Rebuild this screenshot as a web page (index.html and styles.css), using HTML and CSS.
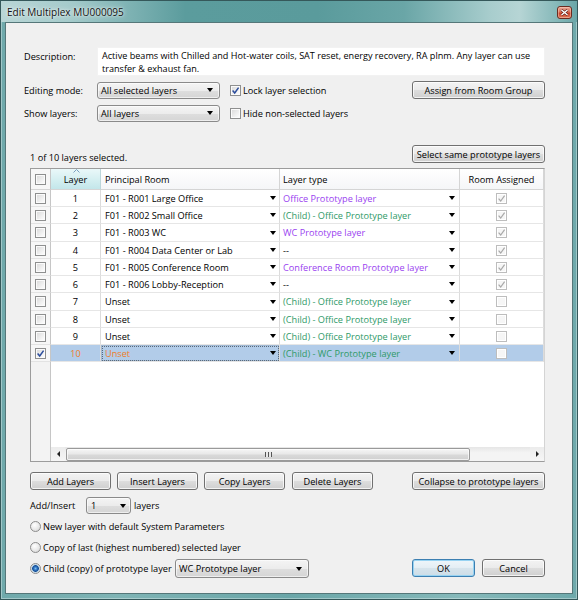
FILE: index.html
```html
<!DOCTYPE html>
<html>
<head>
<meta charset="utf-8">
<link rel="stylesheet" href="styles.css">
</head>
<body>
<div class="window">
  <div class="titlebar">
    <span class="title">Edit Multiplex MU000095</span>
    <span class="close"><svg width="9" height="7" viewBox="0 0 9 7"><path class="xs" d="M1.5 1l6 5M7.5 1l-6 5"/><path class="xw" d="M1.5 1l6 5M7.5 1l-6 5"/></svg></span>
  </div>
  <div class="client">
    <div class="r-desc">
      <div class="label">Description:</div>
      <div class="desc">Active beams with Chilled and Hot-water coils, SAT reset, energy recovery, RA plnm. Any layer can use<br>transfer &amp; exhaust fan.</div>
    </div>
    <div class="r-opt">
      <div class="label">Editing mode:</div>
      <div class="combo c-mode"><span>All selected layers</span><i class="arr"></i></div>
      <div class="check"><span class="cb"><svg viewBox="0 0 9 9"><path class="ckb" d="M1.6 4.6L3.7 7 7.6 1.6"/></svg></span><span>Lock layer selection</span></div>
      <div class="btn b-wide">Assign from Room Group</div>
    </div>
    <div class="r-opt">
      <div class="label">Show layers:</div>
      <div class="combo c-mode"><span>All layers</span><i class="arr"></i></div>
      <div class="check"><span class="cb"></span><span>Hide non-selected layers</span></div>
    </div>
    <div class="r-sel">
      <div class="count">1 of 10 layers selected.</div>
      <div class="btn b-wide">Select same prototype layers</div>
    </div>

    <div class="grid">
      <div class="ghead">
        <div class="rh"><span class="cb"></span></div>
        <div class="h-layer"><svg class="sort" width="7" height="4" viewBox="0 0 7 4"><path d="M0.5 3.5L3.5 0.5 6.5 3.5"/></svg>Layer</div>
        <div class="h-left">Principal Room</div>
        <div class="h-left2">Layer type</div>
        <div class="h-center">Room Assigned</div>
      </div>

      <div class="grow">
        <div class="rh"><span class="cb"></span></div>
        <div class="num">1</div>
        <div class="room"><span>F01 - R001 Large Office</span><i class="arr"></i></div>
        <div class="type purple"><span>Office Prototype layer</span><i class="arr"></i></div>
        <div class="ra"><span class="cb dis"><svg viewBox="0 0 9 9"><path class="ckd" d="M1.6 4.6L3.7 7 7.6 1.6"/></svg></span></div>
      </div>
      <div class="grow">
        <div class="rh"><span class="cb"></span></div>
        <div class="num">2</div>
        <div class="room"><span>F01 - R002 Small Office</span><i class="arr"></i></div>
        <div class="type green"><span>(Child) - Office Prototype layer</span><i class="arr"></i></div>
        <div class="ra"><span class="cb dis"><svg viewBox="0 0 9 9"><path class="ckd" d="M1.6 4.6L3.7 7 7.6 1.6"/></svg></span></div>
      </div>
      <div class="grow tall">
        <div class="rh"><span class="cb"></span></div>
        <div class="num">3</div>
        <div class="room"><span>F01 - R003 WC</span><i class="arr"></i></div>
        <div class="type purple"><span>WC Prototype layer</span><i class="arr"></i></div>
        <div class="ra"><span class="cb dis"><svg viewBox="0 0 9 9"><path class="ckd" d="M1.6 4.6L3.7 7 7.6 1.6"/></svg></span></div>
      </div>
      <div class="grow">
        <div class="rh"><span class="cb"></span></div>
        <div class="num">4</div>
        <div class="room"><span>F01 - R004 Data Center or Lab</span><i class="arr"></i></div>
        <div class="type"><span>--</span><i class="arr"></i></div>
        <div class="ra"><span class="cb dis"><svg viewBox="0 0 9 9"><path class="ckd" d="M1.6 4.6L3.7 7 7.6 1.6"/></svg></span></div>
      </div>
      <div class="grow">
        <div class="rh"><span class="cb"></span></div>
        <div class="num">5</div>
        <div class="room"><span>F01 - R005 Conference Room</span><i class="arr"></i></div>
        <div class="type purple"><span>Conference Room Prototype layer</span><i class="arr"></i></div>
        <div class="ra"><span class="cb dis"><svg viewBox="0 0 9 9"><path class="ckd" d="M1.6 4.6L3.7 7 7.6 1.6"/></svg></span></div>
      </div>
      <div class="grow">
        <div class="rh"><span class="cb"></span></div>
        <div class="num">6</div>
        <div class="room"><span>F01 - R006 Lobby-Reception</span><i class="arr"></i></div>
        <div class="type"><span>--</span><i class="arr"></i></div>
        <div class="ra"><span class="cb dis"><svg viewBox="0 0 9 9"><path class="ckd" d="M1.6 4.6L3.7 7 7.6 1.6"/></svg></span></div>
      </div>
      <div class="grow tall">
        <div class="rh"><span class="cb"></span></div>
        <div class="num">7</div>
        <div class="room"><span>Unset</span><i class="arr"></i></div>
        <div class="type green"><span>(Child) - Office Prototype layer</span><i class="arr"></i></div>
        <div class="ra"><span class="cb dis"></span></div>
      </div>
      <div class="grow">
        <div class="rh"><span class="cb"></span></div>
        <div class="num">8</div>
        <div class="room"><span>Unset</span><i class="arr"></i></div>
        <div class="type green"><span>(Child) - Office Prototype layer</span><i class="arr"></i></div>
        <div class="ra"><span class="cb dis"></span></div>
      </div>
      <div class="grow">
        <div class="rh"><span class="cb"></span></div>
        <div class="num">9</div>
        <div class="room"><span>Unset</span><i class="arr"></i></div>
        <div class="type green"><span>(Child) - Office Prototype layer</span><i class="arr"></i></div>
        <div class="ra"><span class="cb dis"></span></div>
      </div>
      <div class="grow sel">
        <div class="rh"><span class="cb"><svg viewBox="0 0 9 9"><path class="ckb" d="M1.6 4.6L3.7 7 7.6 1.6"/></svg></span></div>
        <div class="num orange">10</div>
        <div class="room orange focus"><span>Unset</span><i class="arr"></i></div>
        <div class="type green"><span>(Child) - WC Prototype layer</span><i class="arr"></i></div>
        <div class="ra"><span class="cb dis"></span></div>
      </div>

      <div class="gfill"></div>

      <div class="hscroll">
        <div class="sb-rh"></div>
        <div class="sb-btn"><i class="arr-l"></i></div>
        <div class="sb-track"><div class="thumb"><i class="grip"></i></div></div>
        <div class="sb-btn"><i class="arr-r"></i></div>
      </div>
    </div>

    <div class="r-btns">
      <div class="btn b-std">Add Layers</div>
      <div class="btn b-std">Insert Layers</div>
      <div class="btn b-std">Copy Layers</div>
      <div class="btn b-std b-del">Delete Layers</div>
      <div class="btn b-wide">Collapse to prototype layers</div>
    </div>

    <div class="r-add">
      <div class="add-label">Add/Insert</div>
      <div class="combo c-num"><span>1</span><i class="arr"></i></div>
      <div class="layers-word">layers</div>
    </div>

    <div class="r-radio r1">
      <span class="radio"></span><span>New layer with default System Parameters</span>
    </div>
    <div class="r-radio r2">
      <span class="radio"></span><span>Copy of last (highest numbered) selected layer</span>
    </div>
    <div class="r-last">
      <span class="radio on"></span><span class="radio-text">Child (copy) of prototype layer</span>
      <div class="combo c-proto"><span>WC Prototype layer</span><i class="arr"></i></div>
      <div class="btn b-ok">OK</div>
      <div class="btn b-cancel">Cancel</div>
    </div>
  </div>
</div>
</body>
</html>
```

FILE: styles.css
```css
* { box-sizing: border-box; }
html, body { margin: 0; padding: 0; }
body {
  width: 578px;
  height: 600px;
  overflow: hidden;
  font-family: "Open Sans", "Liberation Sans", sans-serif;
  font-size: 9.2px;
  color: #000;
  background: #fff;
}

/* ---------- window frame ---------- */
.window {
  width: 578px;
  height: 600px;
  display: flex;
  flex-direction: column;
  border: 1px solid #35585a;
  padding: 0 4px 5px 4px;
  background: linear-gradient(to right, #6fa9ab, #7fb4b5 20%, #6aa6a8 50%, #86b9ba 80%, #6ea9ab);
  box-shadow: inset 0 0 0 1px rgba(255,255,255,0.35);
}
.titlebar {
  height: 21px;
  margin: 0 -4px;
  padding: 0 5px 0 6px;
  display: flex;
  align-items: center;
  background: linear-gradient(to right, #b9d6d6 0%, #a5cbcb 12%, #7fb3b4 22%, #5b9c9d 32%, #5a9b9c 55%, #6aa6a7 70%, #a8cdcd 85%, #b6d5d5 90%, #82b6b7 97%, #6aa6a8 100%);
}
.title {
  font-size: 10px;
  line-height: 12px;
  margin-top: 1px;
  color: #111;
  text-shadow: 0 0 5px rgba(255,255,255,0.9), 0 0 2px rgba(255,255,255,0.8);
}
.close {
  margin-left: auto;
  margin-top: 2px;
  width: 15px;
  height: 13px;
  border: 1px solid #6b2b20;
  border-radius: 3px;
  background: linear-gradient(#eaa897, #d9715a 45%, #c8402a 55%, #de7a5c);
  display: flex;
  align-items: center;
  justify-content: center;
  box-shadow: inset 0 0 0 1px rgba(255,220,200,0.45);
}
.close svg { display: block; }
.close .xs { stroke: #5a1a10; stroke-width: 2.6; fill: none; }
.close .xw { stroke: #fff; stroke-width: 1.5; fill: none; }

.client {
  flex: 1;
  border: 1px solid #557779;
  background: #f0f0f0;
  display: flex;
  flex-direction: column;
}

/* ---------- top rows ---------- */
.label { width: 73px; flex: none; line-height: 11px; }
.r-desc {
  margin-top: 24px;
  padding-left: 18px;
  display: flex;
}
.r-desc .label { padding-top: 4px; }
.desc {
  width: 448px;
  height: 29px;
  background: #fff;
  border: 1px solid #f2f2f2;
  padding: 2px 0 0 4px;
  line-height: 12.5px;
  font-size: 9.1px;
}
.r-opt {
  margin-top: 5px;
  height: 18px;
  padding: 0 27px 0 18px;
  display: flex;
  align-items: center;
}
.combo {
  height: 17px;
  border: 1px solid #8a8a8a;
  border-radius: 3px;
  background: linear-gradient(#f4f4f4, #ececec 50%, #dedede 50%, #d5d5d5);
  box-shadow: inset 0 0 0 1px rgba(255,255,255,0.6);
  display: flex;
  align-items: center;
  padding-left: 3px;
  line-height: 11px;
  flex: none;
}
.c-mode { width: 123px; }
.arr {
  display: block;
  margin-left: auto;
  width: 0;
  height: 0;
  border-left: 3px solid transparent;
  border-right: 3px solid transparent;
  border-top: 4px solid #000;
  flex: none;
}
.combo .arr { margin-right: 6px; }
.check {
  margin-left: 10px;
  display: flex;
  align-items: center;
  gap: 2px;
  line-height: 11px;
}
.cb {
  width: 11px;
  height: 11px;
  flex: none;
  border: 1px solid #8e8f8f;
  background: linear-gradient(135deg, #d8d8d8, #f4f4f4 70%, #fff);
  box-shadow: inset 0 0 0 1px #fbfbfb;
  display: flex;
  align-items: center;
  justify-content: center;
}
.cb svg { width: 9px; height: 9px; display: block; }
.ckb { fill: none; stroke: #2c4d9c; stroke-width: 1.5; }
.ckd { fill: none; stroke: #a9a9a9; stroke-width: 1.2; }
.cb.dis {
  border-color: #bdbdbd;
  background: #f6f6f6;
  box-shadow: inset 0 0 0 1px #fff;
}
.btn {
  height: 18px;
  border: 1px solid #707070;
  border-radius: 3px;
  background: linear-gradient(#f3f3f3, #ebebeb 48%, #dddddd 52%, #cfcfcf);
  box-shadow: inset 0 0 0 1px rgba(255,255,255,0.75);
  display: flex;
  align-items: center;
  justify-content: center;
  line-height: 11px;
  flex: none;
}
.b-wide { width: 133px; margin-left: auto; }

.r-sel {
  margin-top: 23px;
  height: 18px;
  padding: 0 27px 0 24px;
  display: flex;
  align-items: flex-end;
}
.count { line-height: 11px; }

/* ---------- grid ---------- */
.grid {
  margin: 5px 0 0 24px;
  width: 515px;
  height: 294px;
  border: 1px solid #9c9c9c;
  border-right-color: #d4d4d4;
  background: #fff;
  display: flex;
  flex-direction: column;
}
.ghead, .grow {
  display: grid;
  grid-template-columns: 20px 50px 179px 180px 84px;
  flex: none;
}
.ghead { height: 21px; }
.ghead > div {
  border-right: 1px solid #d5d5d5;
  border-bottom: 1px solid #d5d5d5;
  background: linear-gradient(#ffffff, #f5f6f8);
  display: flex;
  align-items: center;
  line-height: 11px;
}
.ghead > .rh { justify-content: center; background: #f7f7f7; border-right-color: #c6c6c6; }
.h-layer {
  position: relative;
  justify-content: center;
  background: linear-gradient(#eaf8f9, #d2eef0 60%, #c3e6ea) !important;
  border-right-color: #bcd6da !important;
}
.sort { position: absolute; left: 22px; top: 0; }
.sort path { fill: none; stroke: #7aa0c0; stroke-width: 1; }
.h-left { padding-left: 4px; }
.h-left2 { padding-left: 3px; }
.h-center { justify-content: center; }

.grow { height: 17px; }
.grow.tall { height: 18px; }
.grow > div {
  border-right: 1px solid #dcdcdc;
  border-bottom: 1px solid #e6e6e6;
  display: flex;
  align-items: center;
  line-height: 11px;
  white-space: nowrap;
  overflow: hidden;
}
.grow > .rh {
  justify-content: center;
  background: #f7f7f7;
  border-right-color: #c6c6c6;
  border-bottom-color: #e3e3e3;
}
.num { justify-content: center; }
.room { padding: 0 3px 0 4px; }
.type { padding: 0 4px 0 3px; }
.ra { justify-content: center; }
.purple { color: #9a3ff0; }
.green { color: #2f9a68; }
.orange { color: #ee7d2a; }
.sel > div:not(.rh) { background: #b2cce9; }
.focus { outline: 1px dotted #5a6a7a; outline-offset: -2px; box-shadow: inset 0 0 0 1px #9fb7d2; }

.gfill {
  flex: 1;
  background: linear-gradient(to right, #f3f3f3 0, #f3f3f3 19px, #c6c6c6 19px, #c6c6c6 20px, #fff 20px);
}
.hscroll { height: 14px; display: flex; flex: none; }
.sb-rh { width: 20px; background: #f3f3f3; border-right: 1px solid #c6c6c6; }
.sb-btn {
  width: 14px;
  background: linear-gradient(#ececec, #f6f6f6);
  display: flex;
  align-items: center;
  justify-content: center;
}
.sb-track {
  flex: 1;
  background: linear-gradient(#e6e6e6, #f4f4f4 40%, #f4f4f4);
  display: flex;
  align-items: center;
  padding-left: 1px;
}
.thumb {
  width: 404px;
  height: 13px;
  border: 1px solid #9a9a9a;
  border-radius: 2px;
  background: linear-gradient(#f6f6f6, #e9e9e9 45%, #d9d9d9 55%, #d0d0d0);
  box-shadow: inset 0 0 0 1px rgba(255,255,255,0.7);
  display: flex;
  align-items: center;
  justify-content: center;
}
.grip {
  display: block;
  width: 7px;
  height: 5px;
  background: repeating-linear-gradient(to right, #555 0, #555 1px, #e8e8e8 1px, #e8e8e8 3px);
}
.arr-l, .arr-r { display: block; width: 0; height: 0; border-top: 3px solid transparent; border-bottom: 3px solid transparent; }
.arr-l { border-right: 3px solid #222; }
.arr-r { border-left: 3px solid #222; }

/* ---------- bottom ---------- */
.r-btns {
  margin-top: 10px;
  height: 18px;
  padding: 0 27px 0 24px;
  display: flex;
  gap: 6px;
}
.b-std { width: 81px; }
.b-del { margin-left: 1px; }

.r-add {
  margin-top: 7px;
  height: 17px;
  padding-left: 24px;
  display: flex;
  align-items: center;
  line-height: 11px;
}
.add-label { width: 56px; }
.c-num { width: 45px; padding-left: 4px; }
.c-num .arr { margin-right: 4px; }
.layers-word { margin-left: 3px; }

.r-radio {
  height: 13px;
  padding-left: 24px;
  display: flex;
  align-items: center;
  gap: 2px;
  line-height: 11px;
}
.r1 { margin-top: 6px; }
.r2 { margin-top: 8px; }
.radio {
  width: 11px;
  height: 11px;
  flex: none;
  border: 1px solid #8c8c8c;
  border-radius: 50%;
  background: radial-gradient(circle at 40% 35%, #ffffff, #e6e6e6 60%, #d0d0d0);
}
.radio.on {
  background: radial-gradient(circle at 50% 50%, #7cc0f0 0, #2a6fbf 1.8px, #1a4f94 3px, #a8cbe4 3.6px, #eeeeee 4.6px);
}
.r-last {
  margin-top: 5px;
  height: 19px;
  padding: 0 27px 0 24px;
  display: flex;
  align-items: center;
  line-height: 11px;
}
.radio-text { margin-left: 2px; width: 131px; flex: none; }
.c-proto { width: 134px; height: 19px; margin-left: 1px; }
.b-ok {
  width: 63px;
  margin-left: auto;
  align-self: flex-start;
  border-color: #3c7fb1;
  background: linear-gradient(#eef6fa, #e4eef4 48%, #d6e4ec 52%, #cddde7);
  box-shadow: inset 0 0 0 1px #97d3f2;
}
.b-cancel { width: 63px; margin-left: 7px; align-self: flex-start; }
```
